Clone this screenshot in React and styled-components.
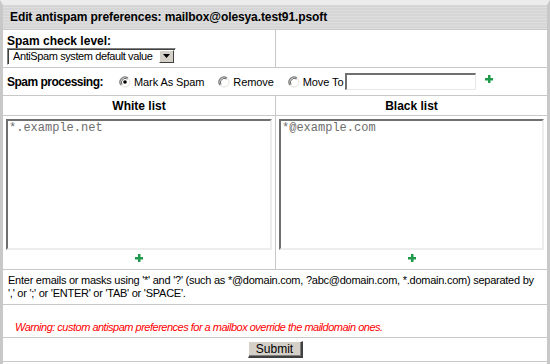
import React from "react";
import styled, { createGlobalStyle } from "styled-components";

const Global = createGlobalStyle`
  html, body { margin: 0; padding: 0; background: #fff; }
  body { font-family: "Liberation Sans", Arial, sans-serif; font-size: 11px; color: #000; }
`;

const Frame = styled.div`
  width: 550px;
  height: 364px;
  box-sizing: border-box;
  background: #fff;
  border-left: 3px solid #c8c8c8;
  border-right: 3px solid #c8c8c8;
  border-top: 5px solid #ececec;
  display: grid;
  grid-template-columns: 273px 1fr;
  grid-template-rows: 25px 38px 28px 20px 154px 35px 33px 24px;
`;

const Header = styled.div`
  grid-column: 1 / 3;
  background: repeating-linear-gradient(180deg, #d6d6d6 0px, #d6d6d6 2px, #dedede 2px, #dedede 3px);
  font-weight: bold;
  font-size: 12px;
  letter-spacing: -0.1px;
  display: flex;
  align-items: center;
  padding-left: 7px;
  border-bottom: 1px solid #c8c8c8;
`;

const Cell = styled.div`
  grid-column: ${(p) => (p.$span ? "1 / 3" : "auto")};
  border-bottom: 1px solid #c8c8c8;
  border-right: ${(p) => (p.$divider ? "1px solid #c8c8c8" : "none")};
  box-sizing: border-box;
  padding: ${(p) => p.$pad || "0 4px"};
  display: flex;
  flex-direction: ${(p) => (p.$col ? "column" : "row")};
  align-items: ${(p) => p.$align || "center"};
  justify-content: ${(p) => p.$justify || "flex-start"};
`;

const Label = styled.span`
  font-weight: bold;
  font-size: 12px;
  letter-spacing: ${(p) => p.$ls || "0"};
  white-space: nowrap;
`;

const SelectBox = styled.div`
  width: 169px;
  height: 17px;
  box-sizing: border-box;
  border-top: 1px solid #808080;
  border-left: 1px solid #808080;
  border-right: 1px solid #fff;
  border-bottom: 1px solid #fff;
  box-shadow: inset 1px 1px 0 #404040;
  display: flex;
  align-items: center;
  background: #fff;
  font-size: 11px;
  letter-spacing: -0.4px;
  white-space: nowrap;
  padding-left: 5px;
  justify-content: space-between;
`;

const Arrow = styled.div`
  width: 15px;
  height: 13px;
  margin-right: 1px;
  background: #d4d0c8;
  box-sizing: border-box;
  border-top: 1px solid #fff;
  border-left: 1px solid #fff;
  border-right: 1px solid #404040;
  border-bottom: 1px solid #404040;
  display: flex;
  align-items: center;
  justify-content: center;
`;

const Radio = ({ checked }) => (
  <svg width="12" height="12" viewBox="0 0 12 12">
    <circle cx="6" cy="6" r="5" fill="#fff" stroke="#e4e2dc" strokeWidth="1" />
    <path d="M2 9 A5 5 0 0 1 9 2" stroke="#808080" strokeWidth="1.3" fill="none" />
    <path d="M3 8.5 A4 4 0 0 1 8.5 3" stroke="#404040" strokeWidth="0.8" fill="none" />
    {checked && <circle cx="6" cy="6" r="1.8" fill="#000" />}
  </svg>
);

const RadioItem = styled.label`
  display: flex;
  align-items: center;
  gap: 3px;
  font-size: 11px;
  letter-spacing: -0.1px;
  white-space: nowrap;
  margin-left: ${(p) => p.$ml || "0"};
`;

const TextInput = styled.div`
  width: 131px;
  height: 17px;
  box-sizing: border-box;
  border-top: 2px solid #707070;
  border-left: 2px solid #707070;
  border-right: 1px solid #e8e8e8;
  border-bottom: 1px solid #e8e8e8;
  background: #fff;
  margin-left: 2px;
`;

const PlusWrap = styled.span`
  display: inline-flex;
  margin-left: ${(p) => p.$ml || "0"};
  margin-top: ${(p) => p.$mt || "0"};
`;

const Plus = ({ ml, mt }) => (
  <PlusWrap $ml={ml} $mt={mt}>
    <svg width="8" height="8" viewBox="0 0 8 8">
      <rect x="3" y="0" width="2.5" height="8" fill="#1f9a4b" />
      <rect x="0" y="3" width="8" height="2.5" fill="#1f9a4b" />
    </svg>
  </PlusWrap>
);

const ColHead = styled.div`
  border-bottom: 1px solid #c8c8c8;
  border-right: ${(p) => (p.$divider ? "1px solid #c8c8c8" : "none")};
  display: flex;
  align-items: center;
  justify-content: center;
  font-weight: bold;
  font-size: 12px;
  padding-top: 1px;
`;

const ListCell = styled.div`
  border-bottom: 1px solid #c8c8c8;
  border-right: ${(p) => (p.$divider ? "1px solid #c8c8c8" : "none")};
  box-sizing: border-box;
  padding: 3px 3px 0 3px;
  display: flex;
  flex-direction: column;
  align-items: center;
`;

const Area = styled.div`
  width: 100%;
  height: 131px;
  box-sizing: border-box;
  border-top: 2px solid #707070;
  border-left: 2px solid #707070;
  border-right: 2px solid #ededed;
  border-bottom: 2px solid #ededed;
  font-family: "Liberation Mono", "Courier New", monospace;
  font-size: 12px;
  color: #6e6e6e;
  padding: 1px 0 0 1px;
  line-height: 13px;
  margin-bottom: 4px;
`;

const Help = styled.div`
  font-size: 11px;
  letter-spacing: -0.25px;
  line-height: 13px;
  padding-left: 1px;
`;

const Warning = styled.div`
  color: #ff0000;
  font-style: italic;
  font-size: 11px;
  letter-spacing: -0.5px;
`;

const Button = styled.button`
  font-family: "Liberation Sans", Arial, sans-serif;
  font-size: 12px;
  width: 55px;
  height: 17px;
  padding: 0;
  background: #d4d0c8;
  border-top: 1px solid #fff;
  border-left: 1px solid #fff;
  border-right: 2px solid #404040;
  border-bottom: 2px solid #404040;
  box-shadow: inset -1px -1px 0 #808080;
  color: #000;
`;

export default function App() {
  return (
    <>
      <Global />
      <Frame>
        <Header>Edit antispam preferences: mailbox@olesya.test91.psoft</Header>
        <Cell $divider $col $align="flex-start" $justify="center" $pad="1px 4px 0 4px">
          <Label>Spam check level:</Label>
          <SelectBox>
            <span>AntiSpam system default value</span>
            <Arrow>
              <svg width="7" height="4" viewBox="0 0 7 4">
                <path d="M0 0 H7 L3.5 4 Z" fill="#000" />
              </svg>
            </Arrow>
          </SelectBox>
        </Cell>
        <Cell />
        <Cell $span>
          <Label $ls="-0.5px">Spam processing:</Label>
          <RadioItem $ml="16px">
            <Radio checked /> Mark As Spam
          </RadioItem>
          <RadioItem $ml="14px">
            <Radio /> Remove
          </RadioItem>
          <RadioItem $ml="14px">
            <Radio /> Move To
          </RadioItem>
          <TextInput />
          <Plus ml="9px" mt="-5px" />
        </Cell>
        <ColHead $divider>White list</ColHead>
        <ColHead>Black list</ColHead>
        <ListCell $divider>
          <Area>*.example.net</Area>
          <Plus />
        </ListCell>
        <ListCell>
          <Area>*@example.com</Area>
          <Plus />
        </ListCell>
        <Cell $span>
          <Help>
            Enter emails or masks using '*' and '?' (such as *@domain.com, ?abc@domain.com, *.domain.com) separated by
            <br />
            ',' or ';' or 'ENTER' or 'TAB' or 'SPACE'.
          </Help>
        </Cell>
        <Cell $span $align="flex-end" $pad="0 0 4px 12px">
          <Warning>Warning: custom antispam preferences for a mailbox override the maildomain ones.</Warning>
        </Cell>
        <Cell $span $justify="center" $pad="0">
          <Button>Submit</Button>
        </Cell>
      </Frame>
    </>
  );
}
